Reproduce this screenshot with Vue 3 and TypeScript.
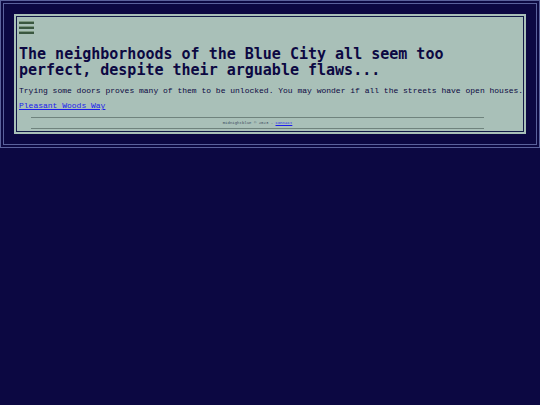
<script setup lang="ts">
const year: number = 2023
</script>

<template>
  <div class="frame">
    <main class="panel">
      <button class="menu" type="button" aria-label="Menu">
        <span></span><span></span><span></span>
      </button>
      <h1>The neighborhoods of the Blue City all seem too perfect, despite their arguable flaws...</h1>
      <p>Trying some doors proves many of them to be unlocked. You may wonder if all the streets have open houses.</p>
      <a class="street" href="#">Pleasant Woods Way</a>
      <footer>midnightblue © {{ year }} - <a href="#">contact</a></footer>
    </main>
  </div>
</template>

<style>
body {
  margin: 0;
  background: #0c0842;
}
</style>

<style scoped>
.frame {
  padding: 10px;
  border: 4px double #5a619b;
  background: #0c0842;
}

.panel {
  padding: 5px 0 3px 3px;
  border: 2px solid #a9c0b8;
  background: #a9c0b8;
  box-shadow: inset 0 0 0 1px #131a48;
  color: #0c0842;
  font-family: "Liberation Mono", monospace;
  font-size: 8px;
  line-height: 10px;
}

.menu {
  display: flex;
  flex-direction: column;
  gap: 2px;
  width: 15px;
  padding: 0;
  border: 0;
  background: none;
}

.menu span {
  height: 2px;
  border-top: 1px solid #7c9780;
  background: #3a5740;
}

h1 {
  margin: 12px 48px 8px 0;
  font-family: "DejaVu Sans Mono", monospace;
  font-size: 15px;
  line-height: 16px;
}

p {
  margin: 0 0 5px;
}

a {
  color: #1c1cec;
}

.street {
  display: block;
  width: fit-content;
}

footer {
  margin: 6px 40px 0 12px;
  border: solid #6f837d;
  border-width: 1px 0;
  color: #3c4c60;
  font-size: 4px;
  line-height: 10px;
  text-align: center;
}
</style>
